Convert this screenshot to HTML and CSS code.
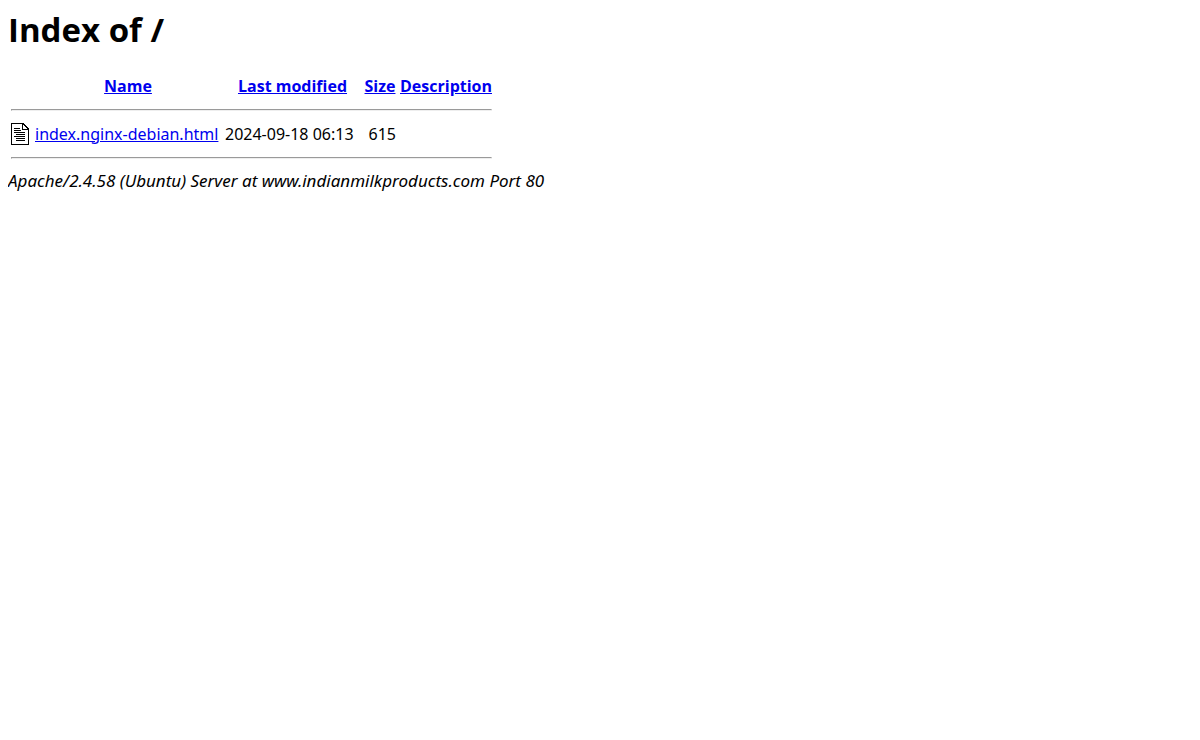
FILE: index.html
```
<!DOCTYPE html>
<html lang="en">
<head>
    <meta charset="UTF-8">
    <meta name="viewport" content="width=device-width, initial-scale=1.0">
    <title>Index of /</title>
    <link rel="stylesheet" href="styles.css">
</head>
<body>
    <h1>Index of /</h1>
    <table class="listing">
        <tr>
            <th></th>
            <th class="name"><a href="?C=N;O=D">Name</a></th>
            <th class="modified"><a href="?C=M;O=A">Last modified</a></th>
            <th class="size"><a href="?C=S;O=A">Size</a></th>
            <th><a href="?C=D;O=A">Description</a></th>
        </tr>
        <tr><th colspan="5"><hr></th></tr>
        <tr>
            <td>
                <svg class="file-icon" width="20" height="22" viewBox="0 0 20 22" shape-rendering="crispEdges">
                    <path d="M0 0h12l6 6v16H0z" fill="#000"/>
                    <path d="M1 1h10v6h6v14H1z" fill="#fff"/>
                    <path d="M12 2v4h4z" fill="#fff"/>
                    <path d="M3 5h6v1H3zM3 7h7v1H3zM3 9h11v1H3zM5 11h9v1H5zM3 13h11v1H3zM5 15h9v1H5zM5 17h9v1H5z" fill="#000"/>
                </svg>
            </td>
            <td><a href="index.nginx-debian.html">index.nginx-debian.html</a></td>
            <td>2024-09-18 06:13</td>
            <td class="bytes">615</td>
            <td>&nbsp;</td>
        </tr>
        <tr><th colspan="5"><hr></th></tr>
    </table>
    <address>Apache/2.4.58 (Ubuntu) Server at www.indianmilkproducts.com Port 80</address>
</body>
</html>
```

FILE: styles.css
```
body {
    margin: 8px;
    background-color: #fff;
    color: #000;
    font-family: "Open Sans", "Noto Sans", sans-serif;
    font-size: 16px;
    line-height: 21px;
}

h1 {
    margin: 0 0 21px;
    font-size: 33px;
    line-height: 44px;
}

a {
    color: #0000ee;
}

.listing {
    border-spacing: 2px;
}

.listing th,
.listing td {
    padding: 1px;
}

.listing td,
address {
    font-family: "Noto Sans", sans-serif;
}

/* Column widths */
.name {
    width: 186px;
}

.modified {
    width: 135px;
}

.size {
    width: 32px;
}

.bytes {
    text-align: right;
}

.file-icon {
    display: block;
}

address {
    font-size: 17px;
}
```
